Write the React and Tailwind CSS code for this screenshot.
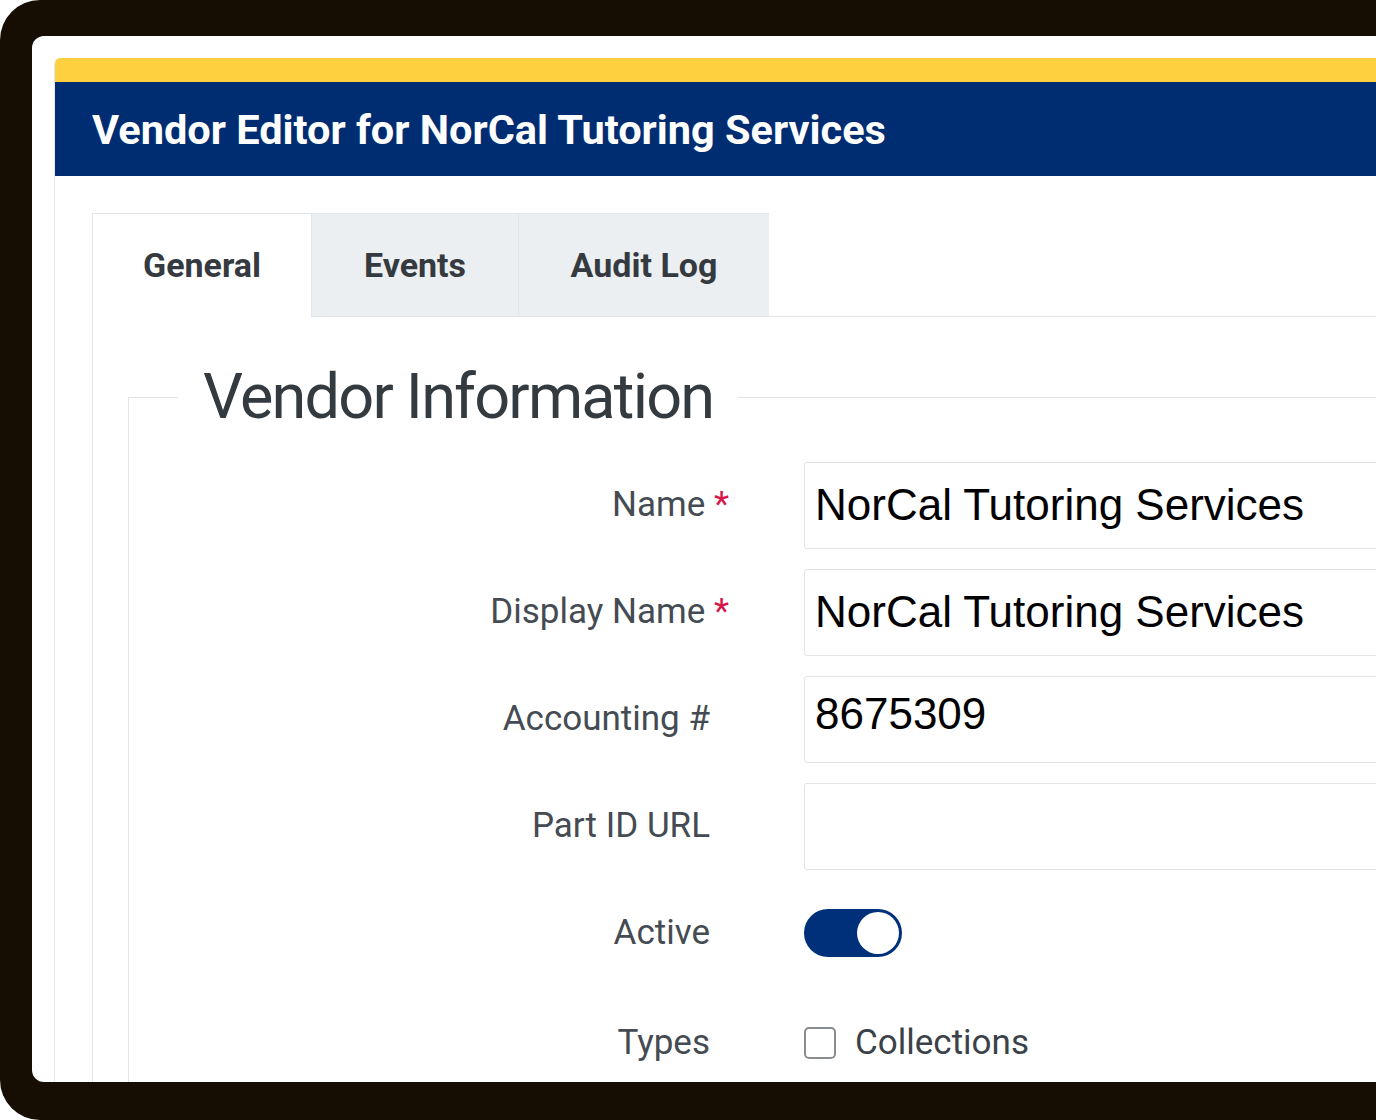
import React from "react";

const ui = { fontFamily: "Roboto, 'Noto Sans', sans-serif" };
const val = { fontFamily: "'Liberation Sans', Arial, sans-serif" };

function Row({ label, required, children, extra }) {
  return (
    <div className={"flex h-[86px] items-center " + (extra || "")}>
      <div
        className={
          "w-[600px] shrink-0 text-right text-[35px] text-[#454b52] " +
          (required ? "" : "pr-[19px]")
        }
        style={ui}
      >
        {label}
        {required && <span className="text-[#d6174a]"> *</span>}
      </div>
      <div className="ml-[75px] flex-1">{children}</div>
    </div>
  );
}

function TextInput({ value, lift }) {
  return (
    <div
      className={
        "flex h-[87px] w-[700px] items-center rounded-[3px] border border-[#e1e4e6] bg-white px-[10px] text-[44px] text-black " +
        (lift ? "pb-[10px]" : "")
      }
      style={val}
    >
      {value}
    </div>
  );
}

export default function App() {
  return (
    <div className="h-[1120px] w-[1376px] overflow-hidden bg-white">
      <div className="h-[1120px] w-[1420px] rounded-l-[40px] bg-[#160e03] pl-[32px] pt-[36px]">
        <div className="h-[1046px] overflow-hidden rounded-l-[12px] bg-white pl-[22px] pt-[22px]">
          <div className="h-[1100px] overflow-hidden rounded-tl-[6px] border-l border-[#e6e8ea]">
            <div className="h-[24px] bg-[#fed03f]" />
            <div
              className="flex h-[94px] items-center bg-[#002d72] px-[37px] pt-[3px] text-[41.5px] font-bold text-white"
              style={ui}
            >
              Vendor Editor for NorCal Tutoring Services
            </div>
            <div className="pl-[37px] pt-[37px]">
              <div className="flex" style={ui}>
                <div className="flex h-[104px] w-[220px] items-center justify-center border-l border-r border-t border-[#e3e6e8] bg-white text-[34px] font-bold text-[#343a40]">
                  General
                </div>
                <div className="flex h-[104px] w-[207px] items-center justify-center border-b border-r border-t border-[#e3e6e8] bg-[#eceff1] text-[34px] font-bold text-[#343a40]">
                  Events
                </div>
                <div className="flex h-[104px] w-[250px] items-center justify-center border-b border-t border-[#e3e6e8] bg-[#eceff1] text-[34px] font-bold text-[#343a40]">
                  Audit Log
                </div>
                <div className="h-[104px] flex-1 border-b border-[#e3e6e8]" />
              </div>
              <div className="h-[800px] border-l border-[#e3e6e8] pl-[35px] pt-[44px]">
                <fieldset className="h-[760px] border-l border-t border-[#e3e6e8] pt-[29px]">
                  <legend
                    className="ml-[49px] px-[25px] text-[63px] leading-[72px] tracking-[-1.8px] text-[#333a40]"
                    style={ui}
                  >
                    Vendor Information
                  </legend>
                  <div className="flex flex-col gap-[21px]">
                    <Row label="Name" required>
                      <TextInput value="NorCal Tutoring Services" />
                    </Row>
                    <Row label="Display Name" required>
                      <TextInput value="NorCal Tutoring Services" />
                    </Row>
                    <Row label="Accounting #">
                      <TextInput value="8675309" lift />
                    </Row>
                    <Row label="Part ID URL">
                      <TextInput value="" />
                    </Row>
                    <Row label="Active">
                      <div className="flex h-[48px] w-[98px] items-center justify-end rounded-full bg-[#00307a] pr-[3px]">
                        <div className="h-[42px] w-[42px] rounded-full bg-white" />
                      </div>
                    </Row>
                    <Row label="Types" extra="pt-[6px]">
                      <div className="flex items-center">
                        <div className="h-[32px] w-[32px] rounded-[5px] border-2 border-[#8a8d90] bg-white" />
                        <span className="ml-[19px] text-[35px] text-[#3b4148]" style={ui}>
                          Collections
                        </span>
                      </div>
                    </Row>
                  </div>
                </fieldset>
              </div>
            </div>
          </div>
        </div>
      </div>
    </div>
  );
}
